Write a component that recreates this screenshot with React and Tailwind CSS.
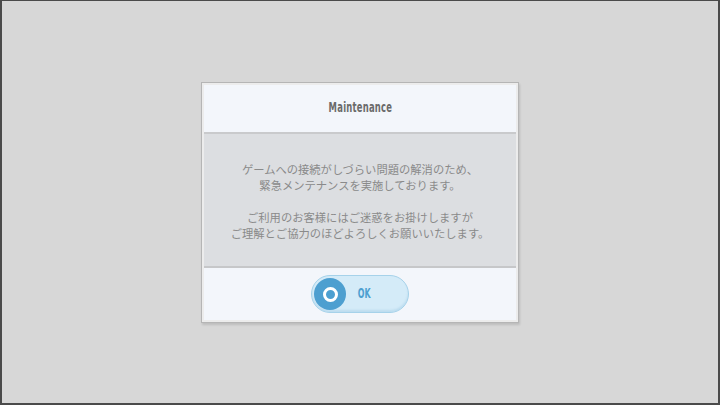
export default function App() {
  return (
    <div className="w-[720px] h-[405px] bg-[#4a4a4a] pt-px pl-[2px] pr-[2px] pb-[2px]">
      <div className="w-full h-full bg-[#d7d7d7] flex items-start justify-center pt-[81px]">
        <div className="w-[318px] border border-[#b5b5b5] bg-[#ececec] p-[2px] shadow-[1px_2px_2px_rgba(0,0,0,0.12)] flex flex-col">
          {/* title bar */}
          <div className="h-[47px] bg-[#f3f6fb] flex items-center justify-center">
            <span
              className="text-[12.5px] font-semibold text-[#6a6a6a] scale-x-[0.75] scale-y-[1.1] tracking-[0.3px]"
              style={{ fontFamily: '"DejaVu Sans Condensed", "Liberation Sans Narrow", sans-serif' }}
            >
              Maintenance
            </span>
          </div>
          {/* message body */}
          <div className="h-[136px] bg-[#dcdee1] border-t-[2px] border-t-[#c9cacc] border-b-[2px] border-b-[#c6c7c9] flex items-center justify-center">
            <p
              className="text-[11.3px] leading-[16px] text-[#8a8a8a] text-center mt-[2px]"
              style={{ fontFamily: '"Noto Sans CJK JP", "Noto Sans", sans-serif' }}
            >
              ゲームへの接続がしづらい問題の解消のため、
              <br />
              緊急メンテナンスを実施しております。
              <br />
              <br />
              ご利用のお客様にはご迷惑をお掛けしますが
              <br />
              ご理解とご協力のほどよろしくお願いいたします。
            </p>
          </div>
          {/* action row */}
          <div className="h-[52px] bg-[#f3f6fb] flex items-center justify-center">
            <button className="w-[98px] h-[38px] rounded-full bg-[#d4ebf8] border border-[#a6d2ea] shadow-[inset_0_-2px_2px_rgba(120,180,215,0.25)] flex items-center pl-[2px]">
              <span className="w-[32px] h-[32px] rounded-full bg-[#4d9fd0] flex items-center justify-center">
                <span className="w-[15px] h-[15px] rounded-full border-[3px] border-white bg-[#4d9fd0]" />
              </span>
              <span
                className="ml-[9px] text-[12.5px] font-semibold text-[#4d9fd0] scale-x-[0.7] scale-y-[1.1]"
                style={{ fontFamily: '"DejaVu Sans Condensed", "Liberation Sans Narrow", sans-serif' }}
              >
                OK
              </span>
            </button>
          </div>
        </div>
      </div>
    </div>
  );
}
